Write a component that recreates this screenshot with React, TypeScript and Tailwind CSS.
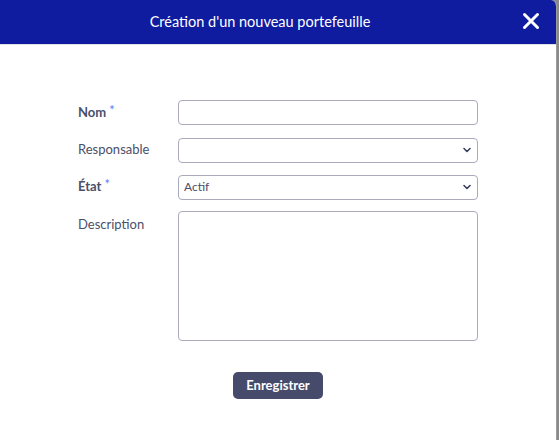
import React, { useState } from "react";

const ChevronDown = () => (
  <svg width="8" height="6" viewBox="0 0 8 6" className="absolute right-[7px] top-1/2 -translate-y-1/2 pointer-events-none">
    <path d="M1 1.5 L4 4.5 L7 1.5" fill="none" stroke="#343a5a" strokeWidth="1.5" strokeLinecap="round" strokeLinejoin="round" />
  </svg>
);

const App = () => {
  const [nom, setNom] = useState("");
  const [responsable, setResponsable] = useState("");
  const [etat, setEtat] = useState("Actif");
  const [description, setDescription] = useState("");

  return (
    <div className="w-[559px] h-[440px] bg-[#8a8a8a] font-['Lato',sans-serif]">
      <div className="w-[557px] h-[440px] bg-white rounded-tr-[6px] overflow-hidden border-r border-[#9a9a9a] flex flex-col">
        <div className="h-[45px] bg-[#0f1c9f] border-b border-[#dee2e6] flex items-center relative shrink-0">
          <h1 className="flex-1 text-center text-white text-[14.5px] pr-[36px] leading-none">
            Création d'un nouveau portefeuille
          </h1>
          <button className="absolute right-[16px] top-[12px] text-white">
            <svg width="18" height="18" viewBox="0 0 18 18">
              <path d="M2.5 2.5 L15.5 15.5 M15.5 2.5 L2.5 15.5" stroke="white" strokeWidth="3" strokeLinecap="round" />
            </svg>
          </button>
        </div>

        <div className="pl-[78px] pt-[55px] flex flex-col">
          <div className="flex items-center h-[25px]">
            <label className="w-[100px] text-[13px] font-bold text-[#4a4f6a]">
              Nom <span className="text-[#5c7cf7] text-[13px] font-normal align-top relative -top-[2px]">*</span>
            </label>
            <input
              value={nom}
              onChange={(e) => setNom(e.target.value)}
              className="w-[300px] h-[25px] border border-[#a9abbd] rounded-[4px] px-[6px] text-[13px] outline-none"
            />
          </div>

          <div className="flex items-center h-[25px] mt-[12px]">
            <label className="w-[100px] text-[13px] text-[#4a4f6a]">Responsable</label>
            <div className="relative">
              <select
                value={responsable}
                onChange={(e) => setResponsable(e.target.value)}
                className="appearance-none w-[300px] h-[25px] border border-[#a9abbd] rounded-[4px] px-[5px] text-[13px] text-[#4a4f6a] outline-none bg-white"
              >
                <option value=""></option>
              </select>
              <ChevronDown />
            </div>
          </div>

          <div className="flex items-center h-[25px] mt-[12px]">
            <label className="w-[100px] text-[13px] font-bold text-[#4a4f6a]">
              État <span className="text-[#5c7cf7] text-[13px] font-normal align-top relative -top-[2px]">*</span>
            </label>
            <div className="relative">
              <select
                value={etat}
                onChange={(e) => setEtat(e.target.value)}
                className="appearance-none w-[300px] h-[25px] border border-[#a9abbd] rounded-[4px] px-[5px] text-[12px] text-[#4a4f6a] outline-none bg-white"
              >
                <option>Actif</option>
                <option>Inactif</option>
              </select>
              <ChevronDown />
            </div>
          </div>

          <div className="flex items-start mt-[12px]">
            <label className="w-[100px] text-[13px] text-[#4a4f6a] pt-[4px]">Description</label>
            <textarea
              value={description}
              onChange={(e) => setDescription(e.target.value)}
              className="w-[300px] h-[130px] border border-[#a9abbd] rounded-[4px] px-[6px] text-[13px] outline-none resize-none"
            />
          </div>

          <div className="flex justify-center w-[400px] mt-[31px]">
            <button className="w-[90px] h-[27px] bg-[#464a6b] text-white text-[13px] font-bold rounded-[5px]">
              Enregistrer
            </button>
          </div>
        </div>
      </div>
    </div>
  );
};

export default App;
